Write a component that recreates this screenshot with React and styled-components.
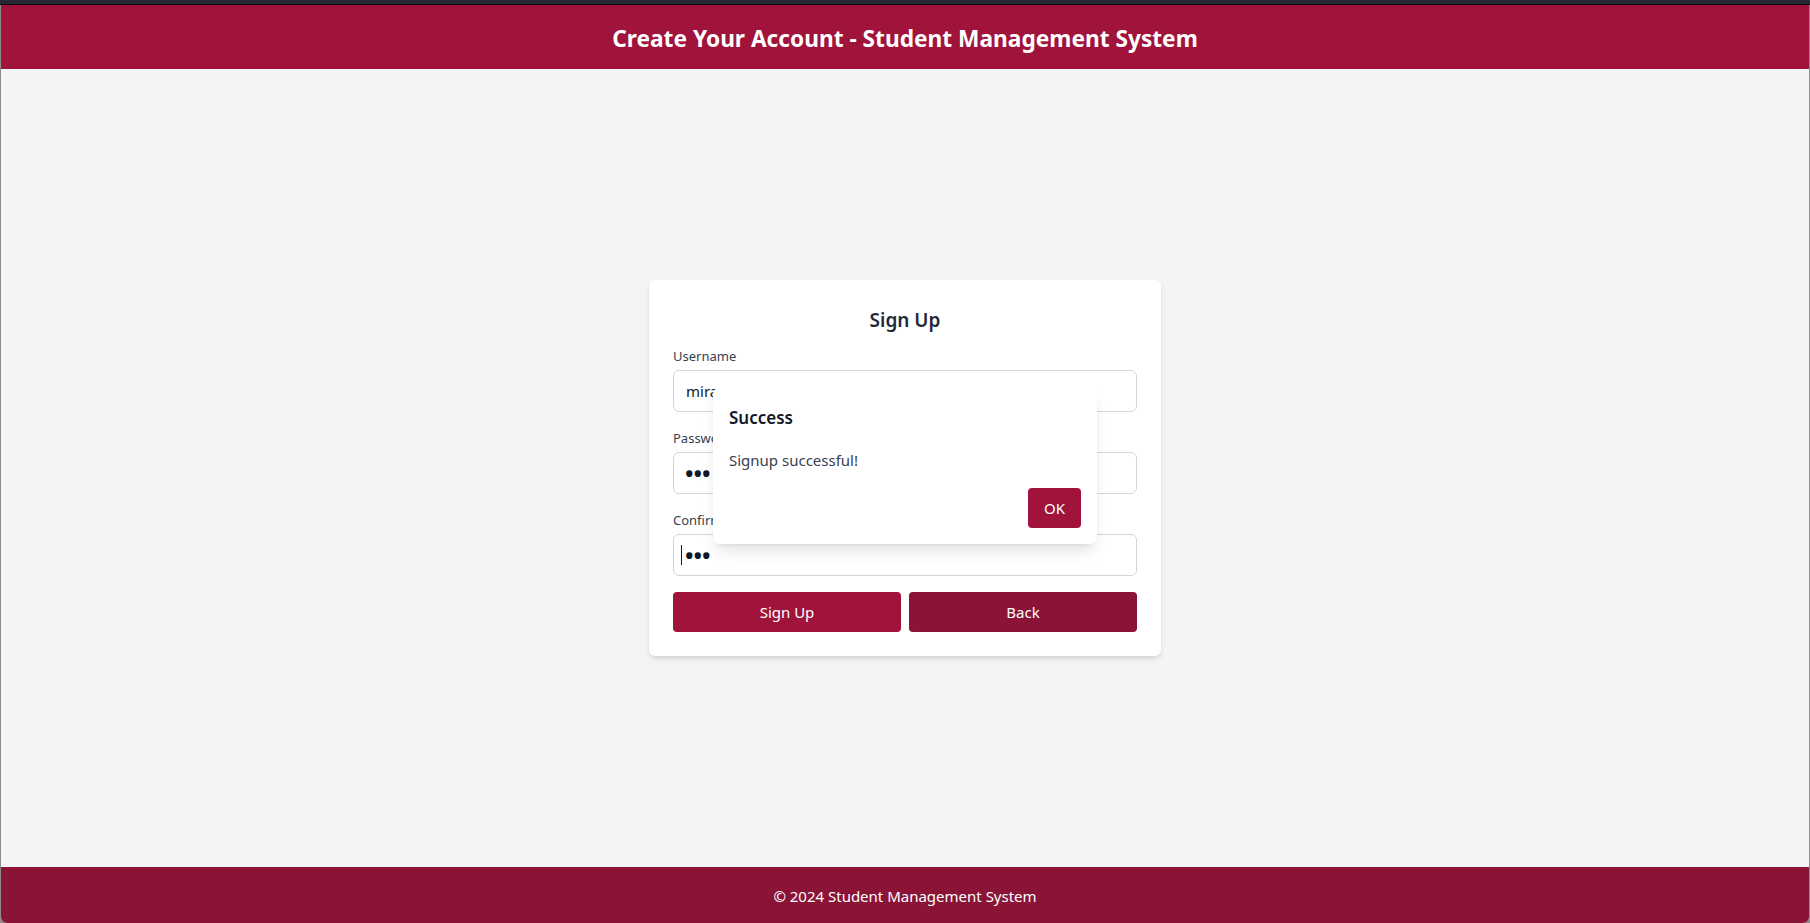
import styled, { createGlobalStyle } from 'styled-components';

const GlobalStyle = createGlobalStyle`
  * {
    box-sizing: border-box;
  }

  body {
    margin: 0;
    background: #8c8c8c;
    font-family: "Segoe UI", "Noto Sans", "Open Sans", sans-serif;
  }
`;

const Window = styled.div`
  height: 100vh;
  display: flex;
  flex-direction: column;
  padding: 0 1px;
`;

const TitleStrip = styled.div`
  height: 5px;
  background: #282832;
  border-bottom: 1px solid #0e0e12;
  margin: 0 -1px;
`;

const AppShell = styled.div`
  position: relative;
  flex: 1;
  display: flex;
  flex-direction: column;
  background: #f3f4f6;
  border-radius: 0 0 6px 6px;
  overflow: hidden;
`;

const Header = styled.header`
  background: #a0133a;
  padding: 18px 16px 14px;
  text-align: center;

  h1 {
    margin: 0;
    color: #ffffff;
    font-size: 22.7px;
    font-weight: 700;
    line-height: 32px;
  }
`;

const Main = styled.main`
  flex: 1;
  display: flex;
  align-items: center;
  justify-content: center;
`;

const Card = styled.div`
  width: 512px;
  background: #ffffff;
  border-radius: 6px;
  box-shadow: 0 4px 6px -1px rgba(0, 0, 0, 0.1), 0 2px 4px -2px rgba(0, 0, 0, 0.1);
  padding: 24px;
`;

const CardTitle = styled.h2`
  margin: 0 0 11px;
  padding-top: 1px;
  text-align: center;
  color: #1f2937;
  font-size: 19px;
  font-weight: 600;
  line-height: 30px;
`;

const Field = styled.div`
  margin-bottom: 16px;
`;

const Label = styled.label`
  display: block;
  margin-bottom: 4px;
  color: #374151;
  font-size: 13px;
  line-height: 20px;
`;

const InputWrap = styled.div`
  position: relative;
`;

const Input = styled.input`
  display: block;
  width: 100%;
  height: 42px;
  padding: ${({ $masked }) => ($masked ? '0 10px' : '8px 12px')};
  border: 1px solid #d1d5db;
  border-radius: 6px;
  font-family: inherit;
  font-size: ${({ $masked }) => ($masked ? '28px' : '15px')};
  letter-spacing: ${({ $masked }) => ($masked ? '-2px' : 'normal')};
  color: #111827;
  background: #ffffff;
  outline: none;
`;

const Caret = styled.span`
  position: absolute;
  left: 8px;
  top: 11px;
  width: 1px;
  height: 20px;
  background: #111827;
`;

const ButtonRow = styled.div`
  display: grid;
  grid-template-columns: 1fr 1fr;
  gap: 8px;
`;

const Button = styled.button`
  height: 40px;
  padding: 0 16px;
  border: none;
  border-radius: 4px;
  background: ${({ $variant }) => ($variant === 'dark' ? '#8a1336' : '#a0133a')};
  color: #ffffff;
  font-family: inherit;
  font-size: 15px;
  cursor: pointer;
`;

const Footer = styled.footer`
  background: #8a1336;
  color: #ffffff;
  text-align: center;
  padding: 17px 16px 15px;
  font-size: 15px;
  line-height: 24px;
`;

const Overlay = styled.div`
  position: absolute;
  inset: 0;
  display: flex;
  align-items: center;
  justify-content: center;
  padding-top: 4px;
`;

const Dialog = styled.div`
  width: 384px;
  background: #ffffff;
  border-radius: 6px;
  box-shadow: 0 10px 15px -3px rgba(0, 0, 0, 0.1), 0 4px 6px -4px rgba(0, 0, 0, 0.1);
  padding: 16px;

  h3 {
    margin: 0 0 16px;
    color: #111827;
    font-size: 17px;
    font-weight: 600;
    line-height: 28px;
  }

  p {
    margin: 0 0 16px;
    color: #374151;
    font-size: 15px;
    line-height: 24px;
  }
`;

const DialogActions = styled.div`
  display: flex;
  justify-content: flex-end;
`;

const App = () => {
  return (
    <>
      <GlobalStyle />
      <Window>
        <TitleStrip />
        <AppShell>
          <Header>
            <h1>Create Your Account - Student Management System</h1>
          </Header>

          <Main>
            <Card>
              <CardTitle>Sign Up</CardTitle>
              <Field>
                <Label>Username</Label>
                <Input type="text" defaultValue="mira" />
              </Field>
              <Field>
                <Label>Password</Label>
                <Input type="password" $masked defaultValue="abc" />
              </Field>
              <Field>
                <Label>Confirm Password</Label>
                <InputWrap>
                  <Input type="password" $masked defaultValue="abc" />
                  <Caret />
                </InputWrap>
              </Field>
              <ButtonRow>
                <Button>Sign Up</Button>
                <Button $variant="dark">Back</Button>
              </ButtonRow>
            </Card>
          </Main>

          <Footer>© 2024 Student Management System</Footer>

          <Overlay>
            <Dialog>
              <h3>Success</h3>
              <p>Signup successful!</p>
              <DialogActions>
                <Button>OK</Button>
              </DialogActions>
            </Dialog>
          </Overlay>
        </AppShell>
      </Window>
    </>
  );
};

export default App;
